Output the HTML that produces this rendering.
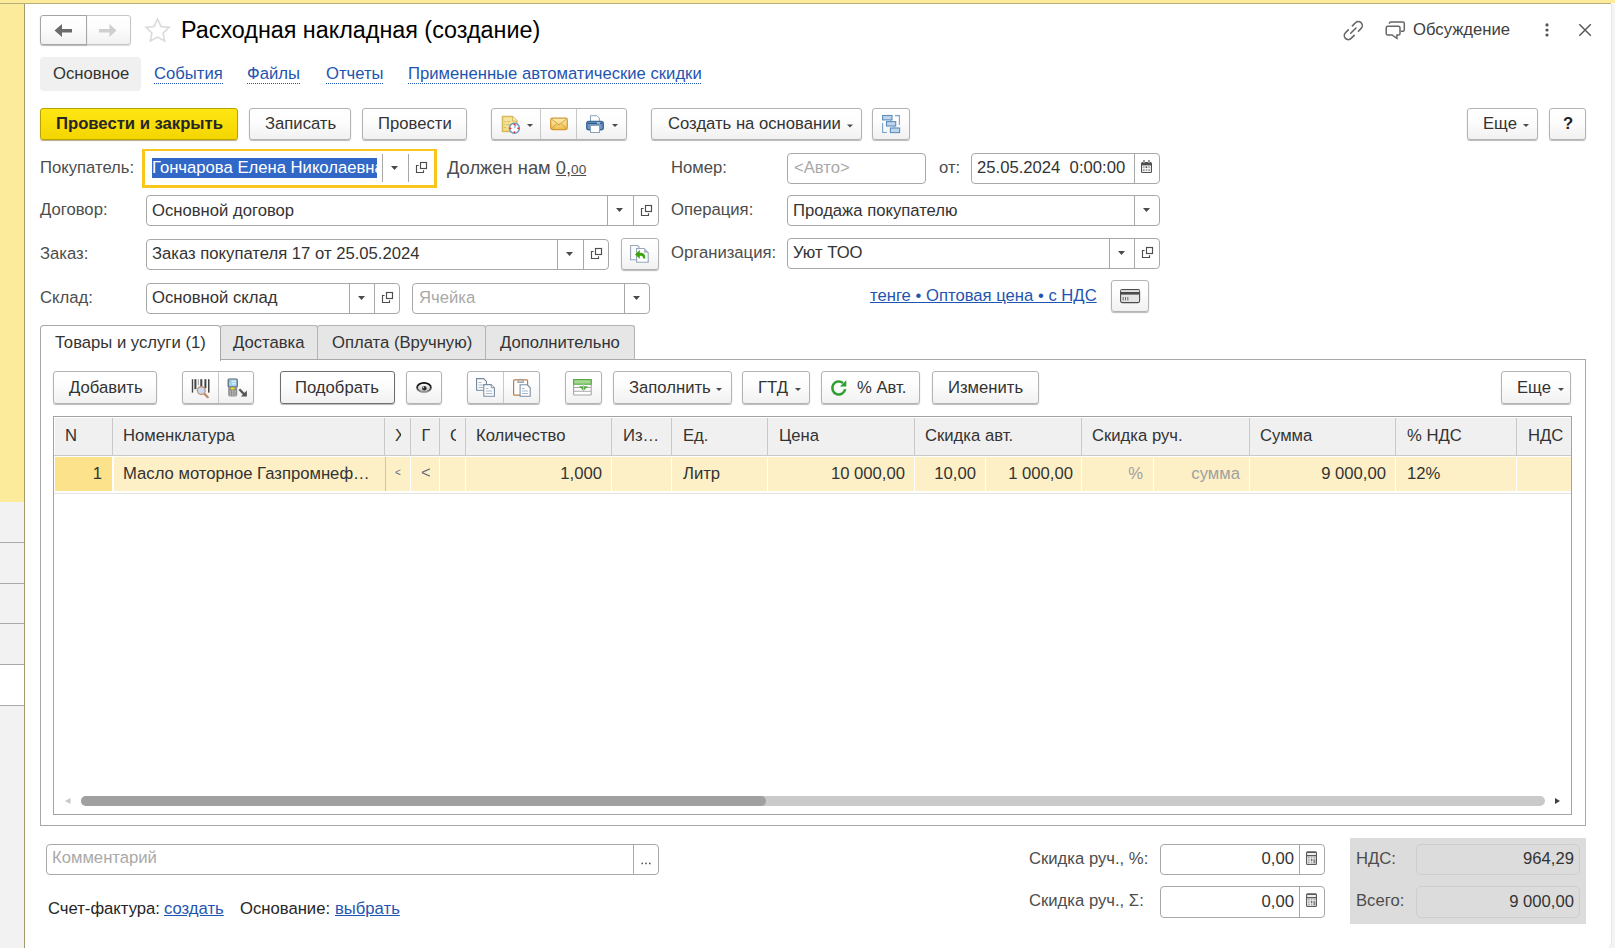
<!DOCTYPE html>
<html><head><meta charset="utf-8"><title>Расходная накладная (создание)</title>
<style>
html,body{margin:0;padding:0;width:1615px;height:948px;overflow:hidden;background:#fff;font-family:"Liberation Sans",sans-serif;}
.a{position:absolute;}
.t{position:absolute;white-space:pre;font-size:16.67px;line-height:20px;color:#333;}
.lb{color:#4d4d4d;}
.lnk{color:#1f55b0;}
.dl::after{content:"";position:absolute;left:0;right:0;top:19px;height:1px;background-image:linear-gradient(to right,#1f55b0 50%,transparent 50%);background-size:2px 1px;}
.dot{background-image:linear-gradient(to right,#1f55b0 50%,transparent 50%);background-size:2px 1px;background-repeat:repeat-x;height:1px;position:absolute;}
.btn{position:absolute;box-sizing:border-box;border:1px solid #b3b3b3;border-radius:3px;background:linear-gradient(#fff 0%,#fdfdfd 40%,#f1f1f1 100%);box-shadow:0 1px 1px rgba(0,0,0,.28);}
.fld{position:absolute;box-sizing:border-box;border:1px solid #a8a8a8;border-radius:4px;background:#fff;}
.vl{position:absolute;width:1px;background:#a8a8a8;}
.hl{position:absolute;height:1px;}
.dd{position:absolute;width:0;height:0;border-left:4px solid transparent;border-right:4px solid transparent;border-top:4px solid #404040;}
.ddb{position:absolute;width:0;height:0;border-left:3px solid transparent;border-right:3px solid transparent;border-top:3px solid #404040;}
svg{position:absolute;overflow:visible;}
</style></head>
<body>
<!-- chrome -->
<div class="a" style="left:0;top:0;width:1615px;height:3px;background:#fbeb9b"></div>
<div class="a" style="left:0;top:3px;width:1611px;height:1px;background:#b9ad78"></div>
<div class="a" style="left:0;top:4px;width:24px;height:498px;background:#fbeb9b"></div>
<div class="a" style="left:0;top:502px;width:24px;height:446px;background:#f2f2f2"></div>
<div class="a" style="left:0;top:664px;width:24px;height:41px;background:#fff"></div>
<div class="a" style="left:0;top:542px;width:24px;height:1px;background:#a9a9a9"></div>
<div class="a" style="left:0;top:583px;width:24px;height:1px;background:#a9a9a9"></div>
<div class="a" style="left:0;top:623px;width:24px;height:1px;background:#a9a9a9"></div>
<div class="a" style="left:0;top:664px;width:24px;height:1px;background:#a9a9a9"></div>
<div class="a" style="left:0;top:705px;width:24px;height:1px;background:#a9a9a9"></div>
<div class="a" style="left:24px;top:4px;width:1px;height:944px;background:#a39a6c"></div>
<div class="a" style="left:1611px;top:4px;width:4px;height:944px;background:#f4f4f4;border-left:1px solid #e8e8e8;box-sizing:border-box"></div>

<div class="a" style="left:1601px;top:941px;width:14px;height:7px;overflow:hidden"><div class="a" style="left:-10px;top:-10px;width:21px;height:21px;box-sizing:border-box;border-radius:11px;border:1px solid #e6e6e6;box-shadow:0 0 0 30px #f4f4f4"></div></div>
<!-- HEADER -->
<div class="btn" style="left:86px;top:15px;width:45px;height:30px;border-color:#c6c6c6;border-radius:0 3px 3px 0;box-shadow:0 1px 1px rgba(0,0,0,.15)"></div>
<div class="btn" style="left:40px;top:15px;width:47px;height:30px;border-color:#a5a5a5;border-radius:3px 0 0 3px"></div>
<svg style="left:0;top:0" width="1" height="1"><path d="M54.5 30.5 L62 24 L62 29 L72 29 L72 32.5 L62 32.5 L62 37 Z" fill="#6b6b6b"/><path d="M116.5 30.5 L109.5 24 L109.5 29 L99 29 L99 32.5 L109.5 32.5 L109.5 37 Z" fill="#cfcfcf"/>
<path d="M157.50 19.00 L160.97 26.43 L169.10 27.43 L163.11 33.02 L164.67 41.07 L157.50 37.10 L150.33 41.07 L151.89 33.02 L145.90 27.43 L154.03 26.43 Z" fill="none" stroke="#dadada" stroke-width="1.6" stroke-linejoin="miter"/></svg>
<div class="t" style="left:181px;top:16px;font-size:23.33px;line-height:28px;color:#000">Расходная накладная (создание)</div>

<div class="t" style="left:1413px;top:20px;color:#404040">Обсуждение</div>

<!-- section tabs -->
<div class="a" style="left:40px;top:57px;width:101px;height:34px;background:#f0f0f0;border-radius:4px"></div>
<div class="t" style="left:53px;top:64px">Основное</div>
<div class="t lnk dl" style="left:154px;top:64px">События</div>
<div class="t lnk dl" style="left:247px;top:64px">Файлы</div>
<div class="t lnk dl" style="left:326px;top:64px">Отчеты</div>
<div class="t lnk dl" style="left:408px;top:64px">Примененные автоматические скидки</div>

<!-- command bar -->
<div class="btn" style="left:40px;top:108px;width:198px;height:32px;border-color:#b9a200;background:linear-gradient(#ffe614,#f4d600);box-shadow:0 1px 1px rgba(90,70,0,.45)"></div>
<div class="t" style="left:56px;top:114px;font-weight:bold;color:#262626">Провести и закрыть</div>
<div class="btn" style="left:249px;top:108px;width:102px;height:32px"></div>
<div class="t" style="left:265px;top:114px">Записать</div>
<div class="btn" style="left:362px;top:108px;width:105px;height:32px"></div>
<div class="t" style="left:378px;top:114px">Провести</div>
<div class="btn" style="left:491px;top:108px;width:136px;height:32px"></div>
<div class="vl" style="left:540px;top:109px;height:30px;background:#c8c8c8"></div>
<div class="vl" style="left:576px;top:109px;height:30px;background:#c8c8c8"></div>
<div class="btn" style="left:651px;top:108px;width:211px;height:32px"></div>
<div class="t" style="left:668px;top:114px">Создать на основании</div>
<div class="btn" style="left:872px;top:108px;width:38px;height:32px"></div>
<div class="btn" style="left:1467px;top:108px;width:71px;height:32px"></div>
<div class="t" style="left:1483px;top:114px">Еще</div>
<div class="btn" style="left:1549px;top:108px;width:37px;height:32px"></div>
<div class="t" style="left:1563px;top:114px;font-weight:bold;color:#222">?</div>

<!--FORM-->
<!-- row1 -->
<div class="t lb" style="left:40px;top:158px">Покупатель:</div>
<div class="a" style="left:142px;top:149px;width:295px;height:39px;box-sizing:border-box;border:3px solid #f9c71c;border-top-width:2px;background:#fff"></div>
<div class="a" style="left:152px;top:158px;width:225px;height:20px;background:#3168c8;overflow:hidden"><div class="t" style="left:0;top:0;color:#fff">Гончарова Елена Николаевна</div></div>
<div class="vl" style="left:382px;top:154px;height:28px"></div>
<div class="vl" style="left:408px;top:154px;height:28px"></div>
<div class="t lb" style="left:447px;top:158px;font-size:18.33px">Должен нам <span style="text-decoration:underline">0</span>,<span style="font-size:13.6px;text-decoration:underline">00</span></div>
<div class="t lb" style="left:671px;top:158px">Номер:</div>
<div class="fld" style="left:787px;top:153px;width:139px;height:31px"></div>
<div class="t" style="left:794px;top:158px;color:#a9a9a9">&lt;Авто&gt;</div>
<div class="t lb" style="left:939px;top:158px">от:</div>
<div class="fld" style="left:971px;top:153px;width:189px;height:31px"></div>
<div class="vl" style="left:1134px;top:154px;height:29px"></div>
<div class="t" style="left:977px;top:158px">25.05.2024  0:00:00</div>
<!-- row2 -->
<div class="t lb" style="left:40px;top:200px">Договор:</div>
<div class="fld" style="left:146px;top:195px;width:513px;height:31px"></div>
<div class="vl" style="left:607px;top:195px;height:31px"></div>
<div class="vl" style="left:633px;top:195px;height:31px"></div>
<div class="t" style="left:152px;top:201px">Основной договор</div>
<div class="t lb" style="left:671px;top:200px">Операция:</div>
<div class="fld" style="left:787px;top:195px;width:373px;height:31px"></div>
<div class="vl" style="left:1134px;top:195px;height:31px"></div>
<div class="t" style="left:793px;top:201px">Продажа покупателю</div>
<!-- row3 -->
<div class="t lb" style="left:40px;top:244px">Заказ:</div>
<div class="fld" style="left:146px;top:239px;width:463px;height:31px"></div>
<div class="vl" style="left:557px;top:239px;height:31px"></div>
<div class="vl" style="left:583px;top:239px;height:31px"></div>
<div class="t" style="left:152px;top:244px">Заказ покупателя 17 от 25.05.2024</div>
<div class="btn" style="left:621px;top:238px;width:38px;height:32px"></div>
<div class="t lb" style="left:671px;top:243px">Организация:</div>
<div class="fld" style="left:787px;top:238px;width:373px;height:31px"></div>
<div class="vl" style="left:1109px;top:238px;height:31px"></div>
<div class="vl" style="left:1134px;top:238px;height:31px"></div>
<div class="t" style="left:793px;top:243px">Уют ТОО</div>
<!-- row4 -->
<div class="t lb" style="left:40px;top:288px">Склад:</div>
<div class="fld" style="left:146px;top:283px;width:254px;height:31px"></div>
<div class="vl" style="left:349px;top:283px;height:31px"></div>
<div class="vl" style="left:374px;top:283px;height:31px"></div>
<div class="t" style="left:152px;top:288px">Основной склад</div>
<div class="fld" style="left:412px;top:283px;width:238px;height:31px"></div>
<div class="vl" style="left:624px;top:283px;height:31px"></div>
<div class="t" style="left:419px;top:288px;color:#a9a9a9">Ячейка</div>
<div class="t lnk" style="left:870px;top:286px;text-decoration:underline">тенге • Оптовая цена • с НДС</div>
<div class="btn" style="left:1111px;top:280px;width:38px;height:32px"></div>

<!-- TABS -->
<div class="a" style="left:40px;top:359px;width:1546px;height:467px;box-sizing:border-box;border:1px solid #a8a8a8;background:#fff"></div>
<div class="a" style="left:220px;top:325px;width:98px;height:35px;box-sizing:border-box;border:1px solid #b4b4b4;border-bottom:1px solid #a8a8a8;border-radius:3px 3px 0 0;background:#e6e6e6"></div>
<div class="a" style="left:317px;top:325px;width:169px;height:35px;box-sizing:border-box;border:1px solid #b4b4b4;border-bottom:1px solid #a8a8a8;border-radius:3px 3px 0 0;background:#e6e6e6"></div>
<div class="a" style="left:485px;top:325px;width:150px;height:35px;box-sizing:border-box;border:1px solid #b4b4b4;border-bottom:1px solid #a8a8a8;border-radius:3px 3px 0 0;background:#e6e6e6"></div>
<div class="a" style="left:40px;top:325px;width:181px;height:36px;box-sizing:border-box;border:1px solid #a8a8a8;border-bottom:none;border-radius:4px 4px 0 0;background:#fff"></div>
<div class="t" style="left:55px;top:333px">Товары и услуги (1)</div>
<div class="t" style="left:233px;top:333px">Доставка</div>
<div class="t" style="left:332px;top:333px">Оплата (Вручную)</div>
<div class="t" style="left:500px;top:333px">Дополнительно</div>

<!-- TOOLBAR2 -->
<div class="btn" style="left:53px;top:371px;width:104px;height:33px"></div>
<div class="t" style="left:69px;top:378px">Добавить</div>
<div class="btn" style="left:182px;top:371px;width:72px;height:33px"></div>
<div class="vl" style="left:218px;top:372px;height:31px;background:#c8c8c8"></div>
<div class="btn" style="left:280px;top:371px;width:115px;height:33px;border-color:#6e6e6e"></div>
<div class="t" style="left:295px;top:378px">Подобрать</div>
<div class="btn" style="left:406px;top:371px;width:36px;height:33px"></div>
<div class="btn" style="left:467px;top:371px;width:73px;height:33px"></div>
<div class="vl" style="left:503px;top:372px;height:31px;background:#c8c8c8"></div>
<div class="btn" style="left:565px;top:371px;width:37px;height:33px"></div>
<div class="btn" style="left:613px;top:371px;width:119px;height:33px"></div>
<div class="t" style="left:629px;top:378px">Заполнить</div>
<div class="btn" style="left:742px;top:371px;width:68px;height:33px"></div>
<div class="t" style="left:758px;top:378px">ГТД</div>
<div class="btn" style="left:821px;top:371px;width:99px;height:33px"></div>
<div class="t" style="left:857px;top:378px">% Авт.</div>
<div class="btn" style="left:932px;top:371px;width:107px;height:33px"></div>
<div class="t" style="left:948px;top:378px">Изменить</div>
<div class="btn" style="left:1501px;top:371px;width:70px;height:33px"></div>
<div class="t" style="left:1517px;top:378px">Еще</div>

<!--TABLE-->
<div class="a" style="left:53px;top:416px;width:1519px;height:399px;box-sizing:border-box;border:1px solid #a3a3a3;background:#fff"></div>
<div class="a" style="left:55px;top:418px;width:1516px;height:37px;background:#f0f0f0"></div>
<div class="hl" style="left:54px;top:455px;width:1517px;background:#c9c9c9"></div>
<!-- header dividers -->
<div class="vl" style="left:112px;top:418px;height:37px;background:#c9c9c9"></div>
<div class="vl" style="left:384px;top:418px;height:37px;background:#c9c9c9"></div>
<div class="vl" style="left:410px;top:418px;height:37px;background:#c9c9c9"></div>
<div class="vl" style="left:439px;top:418px;height:37px;background:#c9c9c9"></div>
<div class="vl" style="left:465px;top:418px;height:37px;background:#c9c9c9"></div>
<div class="vl" style="left:611px;top:418px;height:37px;background:#c9c9c9"></div>
<div class="vl" style="left:671px;top:418px;height:37px;background:#c9c9c9"></div>
<div class="vl" style="left:767px;top:418px;height:37px;background:#c9c9c9"></div>
<div class="vl" style="left:914px;top:418px;height:37px;background:#c9c9c9"></div>
<div class="vl" style="left:1081px;top:418px;height:37px;background:#c9c9c9"></div>
<div class="vl" style="left:1249px;top:418px;height:37px;background:#c9c9c9"></div>
<div class="vl" style="left:1395px;top:418px;height:37px;background:#c9c9c9"></div>
<div class="vl" style="left:1516px;top:418px;height:37px;background:#c9c9c9"></div>
<!-- header text -->
<div class="t" style="left:65px;top:426px">N</div>
<div class="t" style="left:123px;top:426px">Номенклатура</div>
<div class="a" style="left:386px;top:420px;width:15px;height:34px;overflow:hidden"><div class="t" style="left:9px;top:6px">Х</div></div>
<div class="a" style="left:412px;top:420px;width:18.2px;height:34px;overflow:hidden"><div class="t" style="left:9.5px;top:6px">П</div></div>
<div class="a" style="left:441px;top:420px;width:15.2px;height:34px;overflow:hidden"><div class="t" style="left:9px;top:6px">С</div></div>
<div class="t" style="left:476px;top:426px">Количество</div>
<div class="t" style="left:623px;top:426px">Из…</div>
<div class="t" style="left:683px;top:426px">Ед.</div>
<div class="t" style="left:779px;top:426px">Цена</div>
<div class="t" style="left:925px;top:426px">Скидка авт.</div>
<div class="t" style="left:1092px;top:426px">Скидка руч.</div>
<div class="t" style="left:1260px;top:426px">Сумма</div>
<div class="t" style="left:1407px;top:426px">% НДС</div>
<div class="t" style="left:1528px;top:426px">НДС</div>
<!-- row -->
<div class="a" style="left:55px;top:457px;width:57px;height:34px;background:#fde28c"></div>
<div class="a" style="left:114px;top:457px;width:1457px;height:34px;background:#fdf0c6"></div>
<div class="a" style="left:385px;top:457px;width:1px;height:34px;background:#c4c4c4"></div>
<div class="a" style="left:410px;top:457px;width:1px;height:34px;background:#fff"></div>
<div class="a" style="left:439px;top:457px;width:1px;height:34px;background:#fff"></div>
<div class="a" style="left:465px;top:457px;width:1px;height:34px;background:#fff"></div>
<div class="a" style="left:611px;top:457px;width:1px;height:34px;background:#fff"></div>
<div class="a" style="left:671px;top:457px;width:1px;height:34px;background:#fff"></div>
<div class="a" style="left:767px;top:457px;width:1px;height:34px;background:#fff"></div>
<div class="a" style="left:914px;top:457px;width:1px;height:34px;background:#fff"></div>
<div class="a" style="left:985px;top:457px;width:1px;height:34px;background:#fff"></div>
<div class="a" style="left:1081px;top:457px;width:1px;height:34px;background:#fff"></div>
<div class="a" style="left:1153px;top:457px;width:1px;height:34px;background:#fff"></div>
<div class="a" style="left:1249px;top:457px;width:1px;height:34px;background:#fff"></div>
<div class="a" style="left:1395px;top:457px;width:1px;height:34px;background:#fff"></div>
<div class="a" style="left:1516px;top:457px;width:1px;height:34px;background:#fff"></div>
<div class="hl" style="left:54px;top:493px;width:1517px;background:#e4e4e4"></div>
<div class="t" style="left:55px;top:464px;width:47px;text-align:right">1</div>
<div class="t" style="left:123px;top:464px">Масло моторное Газпромнеф…</div>
<div class="a" style="left:386px;top:458px;width:15.3px;height:32px;overflow:hidden"><div class="t" style="left:9px;top:5px;font-size:10px;color:#5d6b7d">&lt;</div></div>
<div class="a" style="left:412px;top:458px;width:18.2px;height:32px;overflow:hidden"><div class="t" style="left:9px;top:5px;color:#5d6b7d">&lt;</div></div>
<div class="t" style="left:466px;top:464px;width:136px;text-align:right">1,000</div>
<div class="t" style="left:683px;top:464px">Литр</div>
<div class="t" style="left:768px;top:464px;width:137px;text-align:right">10 000,00</div>
<div class="t" style="left:915px;top:464px;width:61px;text-align:right">10,00</div>
<div class="t" style="left:986px;top:464px;width:87px;text-align:right">1 000,00</div>
<div class="t" style="left:1082px;top:464px;width:61px;text-align:right;color:#a0a0a0">%</div>
<div class="t" style="left:1154px;top:464px;width:86px;text-align:right;color:#a0a0a0">сумма</div>
<div class="t" style="left:1250px;top:464px;width:136px;text-align:right">9 000,00</div>
<div class="t" style="left:1407px;top:464px">12%</div>
<!-- scrollbar -->
<div class="a" style="left:81px;top:796px;width:1464px;height:10px;border-radius:5px;background:#cacaca"></div>
<div class="a" style="left:81px;top:796px;width:685px;height:10px;border-radius:5px;background:#a0a0a0"></div>
<svg style="left:0;top:0" width="1" height="1"><path d="M65 801 L70.5 798 L70.5 804 Z" fill="#c8c8c8"/><path d="M1560 801 L1555 798 L1555 804 Z" fill="#404040"/></svg>

<!--BOTTOM-->
<div class="fld" style="left:46px;top:844px;width:613px;height:31px"></div>
<div class="vl" style="left:633px;top:845px;height:29px"></div>
<div class="t" style="left:52px;top:848px;color:#a9a9a9">Комментарий</div>
<svg style="left:0;top:0" width="1" height="1" fill="#505050"><circle cx="642.2" cy="863.4" r="0.85"/><circle cx="646" cy="863.4" r="0.85"/><circle cx="649.8" cy="863.4" r="0.85"/></svg>
<div class="t" style="left:48px;top:899px;color:#262626">Счет-фактура:</div>
<div class="t lnk" style="left:164px;top:899px;text-decoration:underline">создать</div>
<div class="t" style="left:240px;top:899px;color:#262626">Основание:</div>
<div class="t lnk" style="left:335px;top:899px;text-decoration:underline">выбрать</div>

<div class="t lb" style="left:1029px;top:849px">Скидка руч., %:</div>
<div class="fld" style="left:1160px;top:844px;width:165px;height:31px"></div>
<div class="vl" style="left:1299px;top:845px;height:29px"></div>
<div class="t" style="left:1160px;top:849px;width:134px;text-align:right">0,00</div>
<div class="t lb" style="left:1029px;top:891px">Скидка руч., Σ:</div>
<div class="fld" style="left:1160px;top:886px;width:165px;height:32px"></div>
<div class="vl" style="left:1299px;top:887px;height:30px"></div>
<div class="t" style="left:1160px;top:892px;width:134px;text-align:right">0,00</div>

<div class="a" style="left:1350px;top:838px;width:236px;height:86px;background:#dcdcdc"></div>
<div class="a" style="left:1416px;top:844px;width:164px;height:31px;box-sizing:border-box;border:1px solid #cecece;border-radius:5px"></div>
<div class="a" style="left:1416px;top:886px;width:164px;height:32px;box-sizing:border-box;border:1px solid #cecece;border-radius:5px"></div>
<div class="t lb" style="left:1356px;top:849px">НДС:</div>
<div class="t" style="left:1416px;top:849px;width:158px;text-align:right">964,29</div>
<div class="t lb" style="left:1356px;top:891px">Всего:</div>
<div class="t" style="left:1416px;top:892px;width:158px;text-align:right">9 000,00</div>

<!--ICONS-->
<svg style="left:0;top:0" width="1615" height="948" viewBox="0 0 1615 948">
<g fill="none" stroke="#666" stroke-width="1.6" stroke-linecap="round">
<path d="M1352.4 25.9 L1355.47 22.77 A4 4 0 0 1 1361.13 28.43 L1358.4 31.2"/>
<path d="M1348.3 29.9 L1345.47 32.77 A4 4 0 0 0 1351.13 38.43 L1354.2 35.4"/>
<path d="M1350.7 33.3 L1356 28"/>
</g>
<g fill="none" stroke="#666" stroke-width="1.5">
<path d="M1389.4 23.8 V23.3 Q1389.4 21.9 1390.9 21.9 H1402.8 Q1404.3 21.9 1404.3 23.4 V29.8 Q1404.3 31.3 1402.8 31.3 H1401"/>
<path d="M1387.8 26.2 H1398.4 Q1400 26.2 1400 27.8 V33.4 Q1400 35 1398.4 35 H1396.9 V38.4 L1392 35 H1387.8 Q1386.2 35 1386.2 33.4 V27.8 Q1386.2 26.2 1387.8 26.2 Z"/>
</g>
<g fill="#555"><circle cx="1547" cy="24.9" r="1.6"/><circle cx="1547" cy="30" r="1.6"/><circle cx="1547" cy="35" r="1.6"/></g>
<path d="M1579.3 24.2 L1590.8 35.7 M1590.8 24.2 L1579.3 35.7" stroke="#555" stroke-width="1.4"/>
<g fill="none" stroke="#4d4d4d" stroke-width="1.15"><rect x="420.5" y="162.5" width="6" height="6"/><path d="M418.6 165.5 H416.5 V172.5 H423.5 V170.2"/><rect x="645.5" y="205.5" width="6" height="6"/><path d="M643.6 208.5 H641.5 V215.5 H648.5 V213.2"/><rect x="595.5" y="248.5" width="6" height="6"/><path d="M593.6 251.5 H591.5 V258.5 H598.5 V256.2"/><rect x="1146.5" y="247.5" width="6" height="6"/><path d="M1144.6 250.5 H1142.5 V257.5 H1149.5 V255.2"/><rect x="386.5" y="292.5" width="6" height="6"/><path d="M384.6 295.5 H382.5 V302.5 H389.5 V300.2"/></g>
<g fill="#4a4a4a"><path d="M391 166 h7 l-3.5 4 z"/><path d="M616 208 h7 l-3.5 4 z"/><path d="M1143 208 h7 l-3.5 4 z"/><path d="M566 252 h7 l-3.5 4 z"/><path d="M1118 251 h7 l-3.5 4 z"/><path d="M358 296 h7 l-3.5 4 z"/><path d="M633 296 h7 l-3.5 4 z"/><path d="M527 124 h6 l-3 3 z"/><path d="M612 124 h6 l-3 3 z"/><path d="M847 124.5 h6 l-3 3 z"/><path d="M1523 124 h6 l-3 3 z"/><path d="M716 388 h6 l-3 3 z"/><path d="M795 388 h6 l-3 3 z"/><path d="M1558 388 h6 l-3 3 z"/></g>
</svg>
<svg style="left:0;top:0" width="1615" height="948" viewBox="0 0 1615 948">
<defs>
<linearGradient id="genv" x1="0" y1="0" x2="0" y2="1"><stop offset="0" stop-color="#fff0b8"/><stop offset="1" stop-color="#eebc48"/></linearGradient>
<linearGradient id="geyes" x1="0" y1="0" x2="0" y2="1"><stop offset="0" stop-color="#050505"/><stop offset="0.55" stop-color="#333"/><stop offset="1" stop-color="#a0a0a0"/></linearGradient>
<linearGradient id="geyei" x1="0" y1="0" x2="0" y2="1"><stop offset="0" stop-color="#fff"/><stop offset="1" stop-color="#bdbdbd"/></linearGradient>
<linearGradient id="gdoc" x1="0" y1="0" x2="0" y2="1"><stop offset="0" stop-color="#f7e7a0"/><stop offset="1" stop-color="#f3dc80"/></linearGradient>
</defs>
<!-- doc with clock -->
<path d="M502.5 116.5 H512.5 L517 121 V131.5 H502.5 Z" fill="url(#gdoc)" stroke="#d6bb5e" stroke-width="1.6" stroke-linejoin="round"/>
<path d="M512.5 116.5 V121 H517" fill="#fbf3d0" stroke="#d6bb5e" stroke-width="1.2"/>
<g stroke="#d9c070" stroke-width="1"><path d="M504 121.5 h2 M507 121.5 h3 M504 124.5 h1 M506 124.5 h4 M504 127.5 h2"/></g>
<circle cx="514.4" cy="128.3" r="5" fill="#fff" stroke="#6a96c4" stroke-width="1.5"/>
<path d="M514.4 128.3 L516 124.5" stroke="#8aaad8" stroke-width="1.2"/>
<path d="M514.4 128.3 L512.5 128.3" stroke="#fff" stroke-width="1"/>
<g fill="#e02020"><circle cx="514.4" cy="124.6" r="0.9"/><circle cx="514.4" cy="132.1" r="0.9"/><circle cx="510.6" cy="128.3" r="0.9"/><circle cx="518.2" cy="128.3" r="0.9"/></g>
<!-- envelope -->
<rect x="550.7" y="118.2" width="16.6" height="11.4" rx="1.8" fill="url(#genv)" stroke="#d39633" stroke-width="1.2"/>
<path d="M551.5 119 L559 125 L566.5 119 M551.5 129 L556.5 124 M566.5 129 L561.5 124" fill="none" stroke="#cf9436" stroke-width="0.9"/>
<!-- printer -->
<path d="M590.5 115.7 H597 L599.4 118.1 V122 H590.5 Z" fill="#fff" stroke="#8aa0b8" stroke-width="1"/>
<rect x="586.8" y="121.5" width="16.4" height="8.2" rx="2" fill="#6f97c4" stroke="#3b6796" stroke-width="1.5"/>
<path d="M588 123.5 H602" stroke="#2f5a88" stroke-width="1"/>
<rect x="590.5" y="125.5" width="9" height="7" fill="#fff" stroke="#8aa0b8" stroke-width="1"/>
<path d="M597 123 h3" stroke="#fff" stroke-width="0.9"/>
<!-- structure -->
<g fill="#c0d4ea" stroke="#5b8dbd" stroke-width="1.1">
<rect x="882.6" y="115.5" width="9.4" height="4.4"/><rect x="886.5" y="121.6" width="9.2" height="4.4"/><rect x="890.4" y="128" width="9.2" height="4.6"/>
</g>
<path d="M890.6 120 V121.6 M894.4 126 V128 M895 115.6 H899.4 V125 M882.6 123 V132.5 H887" fill="none" stroke="#7aa3cc" stroke-width="1.1"/>
<!-- fill from base -->
<path d="M630.6 245.5 H637.5 L639 247 V259.8 H630.6 Z" fill="#fff" stroke="#97a9b8" stroke-width="1.1"/>
<path d="M636.6 248.5 H644 L648.2 252.7 V262.2 H636.6 Z" fill="#fff" stroke="#94a7b6" stroke-width="1.1"/>
<path d="M644 248.5 V252.7 H648.2 Z" fill="#a8b8c6"/>
<path d="M635 254.5 L639.8 250 V252.8 Q645.5 252.5 645.4 258.4 H643.2 Q643.2 255.4 639.8 255.8 V258.8 Z" fill="#39a40c"/>
<!-- card -->
<rect x="1120.6" y="289.6" width="19" height="13" rx="1.6" fill="#e4e4e4" stroke="#4a4a4a" stroke-width="1.1"/>
<rect x="1121" y="290.2" width="18.2" height="1.6" fill="#dcdcdc"/>
<rect x="1121" y="292" width="18.2" height="2.6" fill="#4a4a4a"/>
<path d="M1123.2 297 V300.5 M1125.5 297 V300.5 M1127.8 297 V300.5" stroke="#777" stroke-width="1.1"/>
<!-- barcode -->
<g fill="#444"><rect x="191.8" y="379.2" width="1.4" height="13.4"/><rect x="194.4" y="379.2" width="2" height="10"/><rect x="200.3" y="379.2" width="2" height="8"/><rect x="204.4" y="379.2" width="2" height="9"/><rect x="208" y="379.2" width="1.5" height="13.4"/></g>
<rect x="197.8" y="379.2" width="1" height="6" fill="#999"/>
<path d="M204.2 393.6 L207.8 397.2" stroke="#b98a68" stroke-width="2.2" stroke-linecap="round"/>
<circle cx="201.3" cy="390.6" r="3.9" fill="#c9dcf7" stroke="#c4977a" stroke-width="1.4"/>
<!-- scanner -->
<rect x="227.6" y="378.4" width="10.2" height="9" rx="1.5" fill="#5a5a5a"/>
<rect x="228.7" y="379.4" width="8" height="7" fill="#9fd3f2"/>
<path d="M231.5 381.3 h4.5 M232 383.8 h4" stroke="#f0f8ff" stroke-width="1"/>
<path d="M229 380.5 l2 1.5" stroke="#5aa8e0" stroke-width="0.8"/>
<path d="M228.2 387.2 H237.2 V394.8 Q237.2 396.6 235.4 396.6 H230 Q228.2 396.6 228.2 394.8 Z" fill="#8c8c8c"/>
<ellipse cx="232.6" cy="388.6" rx="2.1" ry="1" fill="#f4e200"/>
<g fill="#d0d0d0"><rect x="229.6" y="390.6" width="1.5" height="1"/><rect x="232" y="390.6" width="1.5" height="1"/><rect x="234.4" y="390.6" width="1.5" height="1"/><rect x="229.6" y="392.6" width="1.5" height="1"/><rect x="232" y="392.6" width="1.5" height="1"/><rect x="234.4" y="392.6" width="1.5" height="1"/><rect x="229.6" y="394.6" width="1.5" height="1"/><rect x="232" y="394.6" width="1.5" height="1"/><rect x="234.4" y="394.6" width="1.5" height="1"/></g>
<path d="M239.3 389.2 L244.5 394.6" stroke="#555" stroke-width="2.3"/>
<path d="M246.9 390.6 V396.6 H240.9 Z" fill="#555"/>
<!-- eye -->
<ellipse cx="424" cy="387.5" rx="6.9" ry="4.7" fill="url(#geyei)" stroke="url(#geyes)" stroke-width="1.8"/>
<circle cx="424.3" cy="388.2" r="2.3" fill="#2a2a2a"/>
<path d="M423.8 385.8 L424.2 388 L422.2 388.6 Z" fill="#c8c8c8"/>
<!-- copy -->
<path d="M476.6 378.6 H483.6 L486.4 381.4 V390.2 H476.6 Z" fill="#fff" stroke="#73879b" stroke-width="1.1"/>
<path d="M478.5 382.5 h3 M478.5 385 h6 M478.5 387.5 h6" stroke="#9fb0c0" stroke-width="0.9"/>
<path d="M483.8 384.6 H491.2 L494.4 387.8 V396.2 H483.8 Z" fill="#fff" stroke="#7a8ea2" stroke-width="1.1"/>
<path d="M491.2 384.6 V387.8 H494.4" fill="#e6ecf2" stroke="#7a8ea2" stroke-width="0.9"/>
<path d="M485.8 388.5 h2.5 M485.8 391 h6.5 M485.8 393.5 h6.5" stroke="#9fb0c0" stroke-width="0.9"/>
<!-- paste -->
<rect x="513.6" y="379.8" width="14" height="15.4" rx="1" fill="#fff" stroke="#c47a40" stroke-width="1.2"/>
<path d="M517.5 382.4 H523.7 L522.5 379.4 H518.7 Z" fill="#c8c8c8" stroke="#909090" stroke-width="0.8"/>
<path d="M520.1 384.8 H527.2 L530.2 387.8 V396.2 H520.1 Z" fill="#fff" stroke="#7a8ea2" stroke-width="1.1"/>
<path d="M522 388.5 h2.5 M522 391 h6 M522 393.5 h6" stroke="#9fb0c0" stroke-width="0.9"/>
<!-- fill table -->
<rect x="573.6" y="379.6" width="17.6" height="15.4" rx="0.8" fill="#fff" stroke="#a5a5a5" stroke-width="1.1"/>
<rect x="573.6" y="379.6" width="17.6" height="4.6" fill="#a3d98f" stroke="#5aa548" stroke-width="1.1"/>
<path d="M574 387.5 H591 M574 391.3 H591" stroke="#a8a8a8" stroke-width="1.1"/>
<path d="M579 386.2 H588 L583.5 390.8 Z" fill="#5aa548"/>
<path d="M583.5 384 V390" stroke="#a3d98f" stroke-width="1"/>
<!-- refresh -->
<path d="M842.98 383.02 A6.5 6.5 0 1 0 845.2 389.13" fill="none" stroke="#2f9f2f" stroke-width="2.5"/>
<path d="M846.3 380.2 V386.6 H839.9 Z" fill="#2f9f2f"/>
<!-- calendar -->
<rect x="1141" y="162" width="11" height="11" rx="1.5" fill="#505050"/>
<rect x="1142.2" y="165.6" width="8.6" height="6.3" fill="#e4e4e4"/>
<rect x="1142.2" y="165.6" width="8.6" height="6.3" fill="#f4f4f4"/><g fill="#a0a0a0"><rect x="1142.8" y="166.4" width="1.8" height="1.4"/><rect x="1145.6" y="166.4" width="1.6" height="1.6" fill="#555"/><rect x="1148.3" y="166.4" width="1.8" height="1.4"/><rect x="1142.8" y="169.2" width="1.8" height="1.8"/><rect x="1145.7" y="169.2" width="1.4" height="1.8"/><rect x="1148.3" y="169.2" width="1.8" height="1.8"/></g>
<rect x="1143" y="160" width="2" height="3" fill="#9a9a9a"/><rect x="1148" y="160" width="2" height="3" fill="#9a9a9a"/>
<!-- calculators -->
<rect x="1306" y="851.2" width="11" height="13.8" rx="1.5" fill="#5a5a5a"/>
<rect x="1307.1" y="853.0" width="8.8" height="2" fill="#f0f0f0"/>
<rect x="1307.1" y="856.3" width="8.8" height="7.6" fill="#f2f2f2"/>
<g fill="#aaa"><rect x="1307.8" y="856.8" width="2" height="1.6"/><rect x="1310.9" y="856.6" width="1.4" height="2"/><rect x="1313.4" y="856.8" width="2" height="1.6"/>
<rect x="1307.8" y="859.3" width="2" height="1.4"/><rect x="1310.8" y="859.2" width="1.6" height="1.6" fill="#555"/><rect x="1313.4" y="859.2" width="2" height="4.2" fill="#888"/>
<rect x="1307.8" y="861.6" width="2" height="1.6"/><rect x="1310.9" y="861.4" width="1.4" height="2"/></g>
<rect x="1306" y="893.2" width="11" height="13.8" rx="1.5" fill="#5a5a5a"/>
<rect x="1307.1" y="895.0" width="8.8" height="2" fill="#f0f0f0"/>
<rect x="1307.1" y="898.3" width="8.8" height="7.6" fill="#f2f2f2"/>
<g fill="#aaa"><rect x="1307.8" y="898.8" width="2" height="1.6"/><rect x="1310.9" y="898.6" width="1.4" height="2"/><rect x="1313.4" y="898.8" width="2" height="1.6"/>
<rect x="1307.8" y="901.3" width="2" height="1.4"/><rect x="1310.8" y="901.2" width="1.6" height="1.6" fill="#555"/><rect x="1313.4" y="901.2" width="2" height="4.2" fill="#888"/>
<rect x="1307.8" y="903.6" width="2" height="1.6"/><rect x="1310.9" y="903.4" width="1.4" height="2"/></g>
</svg>
</body></html>
